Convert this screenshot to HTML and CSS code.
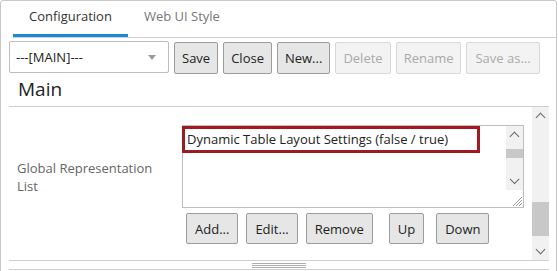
FILE: index.html
```html
<!DOCTYPE html>
<html lang="en">
<head>
    <meta charset="UTF-8">
    <meta name="viewport" content="width=device-width, initial-scale=1.0">
    <title>Configuration</title>
    <link rel="stylesheet" href="styles.css">
</head>
<body>
<div class="panel">
    <!-- Tabs -->
    <div class="tabs">
        <div class="tab active">Configuration</div>
        <div class="tab">Web UI Style</div>
    </div>

    <!-- Toolbar -->
    <div class="toolbar">
        <div class="select">
            <span>---[MAIN]---</span>
            <span class="caret"></span>
        </div>
        <button class="btn">Save</button>
        <button class="btn">Close</button>
        <button class="btn">New...</button>
        <button class="btn" disabled>Delete</button>
        <button class="btn" disabled>Rename</button>
        <button class="btn" disabled>Save as...</button>
    </div>

    <h1 class="title">Main</h1>

    <!-- Settings -->
    <div class="settings">
        <div class="settings-body">
            <div class="field">
                <div class="field-label">Global Representation List</div>
                <div class="field-input">
                    <div class="listbox">
                        <div class="list-items">
                            <div class="list-item selected">Dynamic Table Layout Settings (false / true)</div>
                        </div>
                        <div class="list-side">
                            <div class="vscroll small">
                                <span class="arrow up"></span>
                                <span class="thumb"></span>
                                <span class="arrow down"></span>
                            </div>
                            <div class="grip">
                                <svg width="12" height="12" viewBox="0 0 12 12">
                                    <path d="M11 2L2 11M11 5L5 11M11 8L8 11" stroke="#999" stroke-width="1"/>
                                </svg>
                            </div>
                        </div>
                    </div>
                    <div class="list-buttons">
                        <button class="btn small">Add...</button>
                        <button class="btn small">Edit...</button>
                        <button class="btn small">Remove</button>
                        <button class="btn small sep">Up</button>
                        <button class="btn small">Down</button>
                    </div>
                </div>
            </div>
        </div>
        <div class="vscroll big">
            <span class="arrow up"></span>
            <span class="track"></span>
            <span class="thumb"></span>
            <span class="arrow down"></span>
        </div>
    </div>

    <div class="splitter"><span></span></div>
</div>
</body>
</html>
```

FILE: styles.css
```css
body {
    margin: 0;
    font-family: "Open Sans", "Noto Sans", sans-serif;
    font-size: 13px;
    color: #222;
    background-color: #fff;
}
.panel {
    width: 555px;
    height: 300px;
    border: 1px solid #c8c8c8;
    border-radius: 3px;
}
.tabs {
    display: flex;
    margin: 0 0 0 12px;
    height: 36px;
    border-bottom: 1px solid #cfcfcf;
}
.tab {
    padding: 6px 16px 0;
    color: #777;
    box-sizing: border-box;
    height: 36px;
}
.tab.active {
    color: #333;
    border-bottom: 3px solid #1b8ad3;
}
.toolbar {
    display: flex;
    align-items: flex-start;
    gap: 5px;
    margin: 3px 0 0 8px;
}
.select {
    display: flex;
    align-items: center;
    justify-content: space-between;
    width: 160px;
    height: 32px;
    box-sizing: border-box;
    padding: 0 12px 0 6px;
    border: 1px solid #bdbdbd;
    border-radius: 2px;
}
.caret {
    width: 0;
    height: 0;
    border-left: 4px solid transparent;
    border-right: 4px solid transparent;
    border-top: 5px solid #9a9a9a;
}
.btn {
    font-family: inherit;
    font-size: 13px;
    color: #222;
    height: 32px;
    margin-top: 1px;
    padding: 0 7px;
    background-color: #e6e6e6;
    border: 1px solid #9c9c9c;
    border-radius: 2px;
}
.btn:disabled {
    color: #aaa;
    background-color: #f3f3f3;
    border-color: #d8d8d8;
}
.btn:last-child {
    padding: 0 8px;
}
.title {
    margin: 1px 0 3px 17px;
    font-size: 19px;
    font-weight: normal;
    color: #222;
    height: 28px;
    line-height: 28px;
}
.settings {
    display: flex;
    margin: 0 7px 0 8px;
    height: 153px;
    border-top: 1px solid #cfcfcf;
    border-bottom: 1px solid #cfcfcf;
}
.settings-body {
    flex: 1;
}
.field {
    display: flex;
    padding-top: 18px;
}
.field-label {
    width: 150px;
    padding: 34px 0 0 8px;
    margin-right: 15px;
    color: #666;
    line-height: 18px;
}
.field-input {
    width: 342px;
}
.listbox {
    display: flex;
    height: 83px;
    box-sizing: border-box;
    border: 1px solid #bdbdbd;
}
.list-items {
    flex: 1;
}
.list-item {
    width: 298px;
    box-sizing: border-box;
    margin: 0 0 0 -1px;
    padding: 1px 2px;
    border: 3px solid #a11a20;
    height: 27px;
    line-height: 18px;
    color: #222;
}
.list-side {
    display: flex;
    flex-direction: column;
    width: 17px;
}
.vscroll {
    display: flex;
    flex-direction: column;
    align-items: center;
    background-color: #f1f1f1;
}
.vscroll.small {
    height: 64px;
}
.vscroll.big {
    width: 17px;
}
.vscroll .thumb {
    display: block;
    width: 100%;
    background-color: #c8c8c8;
}
.vscroll.small .thumb {
    height: 10px;
    margin-top: 9px;
}
.vscroll.big .track {
    height: 81px;
}
.vscroll.big .thumb {
    height: 34px;
}
.arrow {
    display: block;
    width: 6px;
    height: 6px;
    border-left: 1.5px solid #666;
    border-top: 1.5px solid #666;
}
.arrow.up {
    transform: rotate(45deg);
    margin-top: 7px;
}
.arrow.down {
    transform: rotate(225deg);
    margin-top: auto;
    margin-bottom: 7px;
}
.vscroll.small .arrow.down {
    margin-top: 18px;
}
.grip {
    flex: 1;
    display: flex;
    align-items: flex-end;
    justify-content: flex-end;
    background-color: #fff;
}
.list-buttons {
    display: flex;
    margin: 5px 0 0 4px;
}
.btn.small {
    height: 31px;
    margin: 0 8px 0 0;
    padding: 0 8px;
}
.btn.sep {
    margin: 0 12px 0 8px;
}
.splitter {
    margin: 0 7px 0 8px;
    height: 8px;
    border-bottom: 1px solid #cfcfcf;
    display: flex;
    justify-content: center;
    align-items: center;
}
.splitter span {
    display: block;
    width: 54px;
    height: 5px;
    border-top: 1px solid #b0b0b0;
    border-bottom: 1px solid #b0b0b0;
    background: linear-gradient(#fff 1px, #b0b0b0 1px, #b0b0b0 2px, #fff 2px);
    box-sizing: border-box;
}
```
